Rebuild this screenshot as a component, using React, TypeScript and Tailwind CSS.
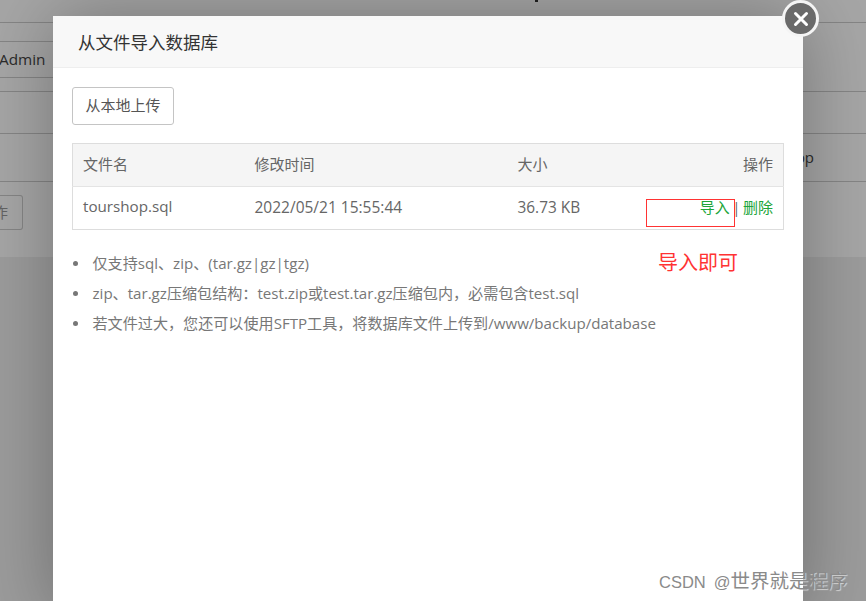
const notes = [
  "仅支持sql、zip、(tar.gz|gz|tgz)",
  "zip、tar.gz压缩包结构：test.zip或test.tar.gz压缩包内，必需包含test.sql",
  "若文件过大，您还可以使用SFTP工具，将数据库文件上传到/www/backup/database",
];

export default function App() {
  return (
    <div className="relative h-[601px] w-[866px] overflow-hidden bg-[#f0f0f0] text-[15px] text-[#666] [font-family:'Open_Sans','Noto_Sans_CJK_SC',sans-serif]">
      {/* page behind the dialog */}
      <div className="h-[257px] bg-white text-[#444]">
        <div className="flex h-[23px] justify-end border-b border-[#ccc] pr-[328px]">
          <div className="h-[2px] w-[3px] bg-[#333]" />
        </div>
        <div className="h-[69px] border-b border-[#ccc] pt-[18px]">
          <div className="flex h-[37px] w-[60px] items-center border-y border-[#ccc] text-[15.3px] -indent-px">Admin</div>
        </div>
        <div className="h-[42px] border-b border-[#ccc]" />
        <div className="flex h-[48px] items-center justify-end border-b border-[#ccc] pr-[52px]">pp</div>
        <div className="pt-[13px]">
          <button className="flex h-[35px] w-[23px] items-center justify-end rounded-r-[3px] border border-l-0 border-[#ccc] pr-[14px] text-[#999]">作</button>
        </div>
      </div>

      {/* backdrop */}
      <div className="absolute inset-0 bg-black/35" />

      {/* dialog */}
      <div className="absolute top-[16px] left-[53px] flex h-[600px] w-[750px] flex-col bg-white shadow-[0_0_70px_rgba(0,0,0,0.3)]">
        <div className="flex h-[52px] items-center border-b border-[#eee] bg-[#f8f8f8] pt-[2px] pl-[25px] text-[17.5px] text-[#333]">
          从文件导入数据库
        </div>
        <div className="px-[19px] pt-[19px]">
          <button className="h-[38px] w-[102px] rounded-[3px] border border-[#c4c4c4] bg-white pb-[2px] text-center text-[15px] text-[#555]">
            从本地上传
          </button>
          <table className="mt-[18px] w-[712px] table-fixed border-collapse border border-[#ddd]">
            <colgroup>
              <col className="w-[182px]" />
              <col className="w-[263px]" />
              <col className="w-[130px]" />
              <col />
            </colgroup>
            <thead>
              <tr className="h-[43px] border-b border-[#e4e4e4] bg-[#f5f5f5] text-left">
                <th className="pb-[2px] pl-[10px] font-normal">文件名</th>
                <th className="pb-[2px] font-normal">修改时间</th>
                <th className="pb-[2px] font-normal">大小</th>
                <th className="pr-[10px] pb-[2px] text-right font-normal">操作</th>
              </tr>
            </thead>
            <tbody>
              <tr className="h-[43px]">
                <td className="pb-[3px] pl-[10px] text-[15.2px]">tourshop.sql</td>
                <td className="text-[15.5px]">2022/05/21 15:55:44</td>
                <td className="text-[15.4px]">36.73 KB</td>
                <td className="pr-[10px] pb-[2px] text-right whitespace-nowrap">
                  <span className="text-[#20a53a]">导入</span>
                  <span className="mx-[2.5px]">|</span>
                  <span className="text-[#20a53a]">删除</span>
                </td>
              </tr>
            </tbody>
          </table>
          <ul className="mt-[19px] text-[15.1px] leading-[29.8px] text-[#777]">
            {notes.map((n) => (
              <li key={n} className="flex items-center whitespace-nowrap">
                <span className="mr-[15px] ml-[0.5px] h-[5px] w-[5px] shrink-0 rounded-full bg-[#777]" />
                {n}
              </li>
            ))}
          </ul>
        </div>
      </div>

      {/* close button */}
      <div className="absolute top-0 left-[782px] flex h-[37px] w-[37px] items-center justify-center rounded-full border-[3px] border-[#f4f4f4] bg-[#6a6a6a]">
        <svg width="18" height="18" viewBox="0 0 18 18">
          <path d="M3.5 3.5 L14.5 14.5 M14.5 3.5 L3.5 14.5" stroke="#fff" strokeWidth="3" strokeLinecap="round" />
        </svg>
      </div>

      {/* annotations */}
      <div className="absolute top-[199px] left-[646px] h-[28px] w-[89px] border border-[#f33]" />
      <div className="absolute top-[249px] left-[658px] text-[20px] leading-[28px] text-[#f33]">导入即可</div>
      <div className="absolute top-[567px] left-[659px] flex items-baseline text-[19.5px] leading-[28px] whitespace-nowrap text-[#8a8a8a] [text-shadow:1px_1px_1px_rgba(255,255,255,0.6)] [font-family:'Liberation_Sans','Noto_Sans_CJK_SC',sans-serif]">
        <span className="mr-[8px] text-[16.5px]">CSDN</span>
        <span className="text-[16.5px]">@</span>
        <span>世界就是程序</span>
      </div>
    </div>
  );
}
